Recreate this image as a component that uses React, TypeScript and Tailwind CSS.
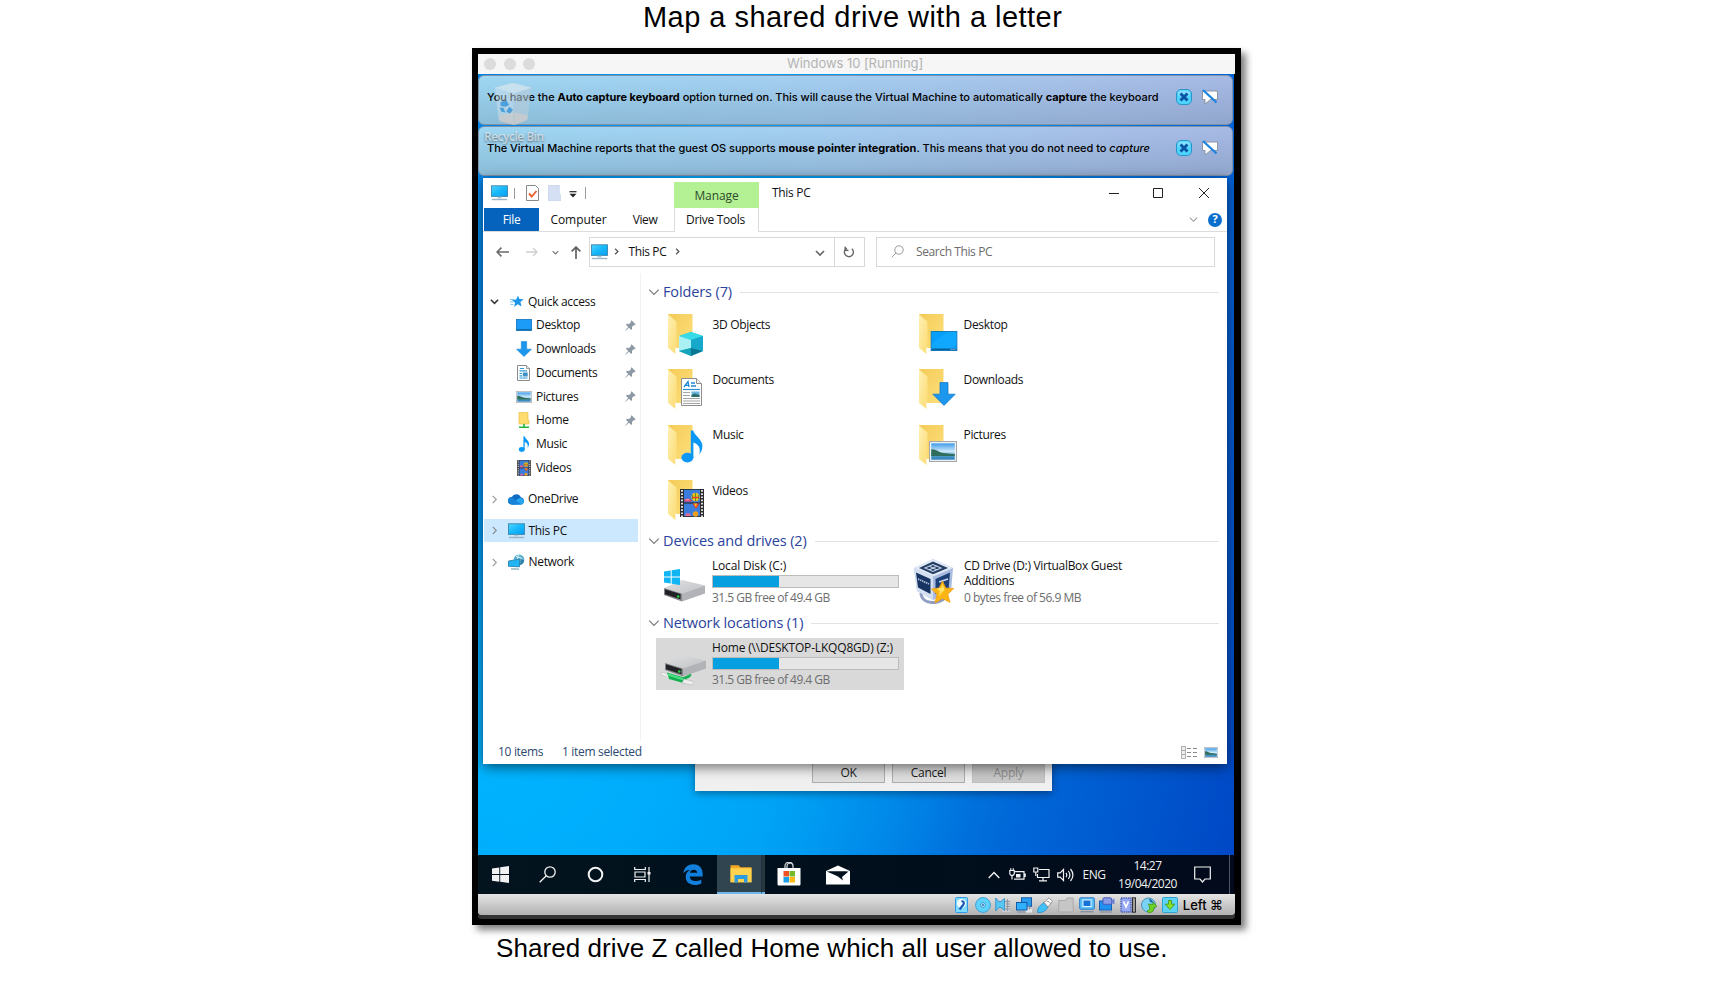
import React from "react";

type IconProps = { className?: string };

const Monitor = ({ className = "" }: IconProps) => (
  <svg viewBox="0 0 17 16" className={className}>
    <defs>
      <linearGradient id="mon" x1="0" y1="0" x2="1" y2="1">
        <stop offset="0" stopColor="#4fd3ff" />
        <stop offset="0.5" stopColor="#16b8fb" />
        <stop offset="1" stopColor="#0a9df0" />
      </linearGradient>
    </defs>
    <rect x="0.5" y="0.8" width="16" height="10.6" fill="url(#mon)" stroke="#3b87ad" strokeWidth="0.9" />
    <rect x="6.5" y="11.8" width="4" height="1.6" fill="#a9c7d8" />
    <rect x="0.8" y="13.8" width="15.4" height="1.4" fill="#9db4c2" />
  </svg>
);

const Chevron = ({ className = "", d = "M1 3l4 4 4-4", w = 1.2 }: IconProps & { d?: string; w?: number }) => (
  <svg viewBox="0 0 10 10" className={className} fill="none" stroke="currentColor" strokeWidth={w}>
    <path d={d} />
  </svg>
);
const RIGHT = "M3 1l4 4-4 4";

const Star = () => (
  <svg viewBox="0 0 14 13" className="h-[13px] w-[14px]">
    <path d="M8 0.4l1.4 3.7 4.3.2-3.3 2.7 1.1 4.6-3.7-2.3-3.7 2.8 1-4.3L2 5l4.200-.6z" fill="#1c96ea" />
    <path d="M0 4.500h4M0 7h3.500M0.500 9.500h3" stroke="#5bb7f2" strokeWidth="0.8" />
  </svg>
);
const DesktopSmall = () => (
  <svg viewBox="0 0 16 12" className="h-[12px] w-[16px]">
    <rect x="0.4" y="0.4" width="15.2" height="11.2" fill="#1c9cf6" stroke="#1173bd" strokeWidth="0.8" />
    <path d="M1 10.6h14" stroke="#0c5c9c" strokeWidth="0.9" />
  </svg>
);
const Arrow = ({ className = "" }: IconProps) => (
  <svg viewBox="0 0 24 24" className={className}>
    <path d="M8 .6h8v11.6h7.2L12 23.4.8 12.2H8z" fill="#1d97ee" stroke="#0f7ccc" strokeWidth="0.8" />
  </svg>
);
const DocSmall = () => (
  <svg viewBox="0 0 13 16" className="h-[16px] w-[13px]">
    <path d="M.5.5h9l3 3v12H.5z" fill="#fff" stroke="#8c8c8c" />
    <path d="M9.5.5v3h3" fill="#e6e6e6" stroke="#8c8c8c" strokeWidth="0.8" />
    <path d="M3 3.500h4M2.500 5.800h7.500M2.500 8.500h2.500M2.500 10.800h2.500M2.500 13h8" stroke="#2f9bd8" strokeWidth="1.200" />
    <rect x="5.800" y="7.500" width="4.900" height="4" fill="#3f8fc4" />
  </svg>
);
const Picture = ({ className = "" }: IconProps) => (
  <svg viewBox="0 0 28 20" className={className} preserveAspectRatio="none">
    <defs>
      <linearGradient id="sky" x1="0" y1="0" x2="0" y2="1">
        <stop offset="0" stopColor="#3f9be8" />
        <stop offset="0.5" stopColor="#cfe9fa" />
        <stop offset="0.7" stopColor="#5aa6cf" />
        <stop offset="1" stopColor="#2a7bb6" />
      </linearGradient>
    </defs>
    <rect x="0.5" y="0.5" width="27" height="19" fill="#fff" stroke="#a3a8ad" strokeWidth="1.300" />
    <rect x="2.200" y="2.200" width="23.600" height="15.600" fill="url(#sky)" />
    <path d="M2.200 8c3-.5 5 .8 8 2.200s9 1.800 15.600 2.300v1.700H2.200z" fill="#2f6e5a" />
  </svg>
);
const HomeFolder = () => (
  <svg viewBox="0 0 12 16" className="h-[16px] w-[12px]">
    <path d="M1 .5h9v8h1v3.500H1z" fill="#ffdc6e" stroke="#e8bf45" strokeWidth="0.7" />
    <path d="M6 12v3M1 15.200h10" stroke="#21b53a" strokeWidth="1.600" />
  </svg>
);
const Note = ({ className = "" }: IconProps) => (
  <svg viewBox="0 0 22 33" className={className}>
    <ellipse cx="6.400" cy="27.600" rx="6" ry="4.800" fill="#0b98f5" />
    <path d="M9.800 28V.5h2.600c.2 4.500 9 8.500 9 15.500 0 3.400-1.200 6-3 8.500 1.500-6.500-.7-10-6-12V28z" fill="#0b98f5" />
  </svg>
);
const Film = ({ className = "" }: IconProps) => (
  <svg viewBox="0 0 24 28" className={className}>
    <rect width="24" height="28" fill="#2c2c30" />
    <rect x="4" y="0.800" width="16" height="12.600" fill="#3a7ddc" />
    <rect x="4" y="14.600" width="16" height="12.600" fill="#3a7ddc" />
    <path d="M2 1v27M22 1v27" stroke="#e8e8e8" strokeWidth="1.900" strokeDasharray="1.700 1.500" />
    <circle cx="15.500" cy="8" r="4.200" fill="#f0c020" />
    <path d="M15.500 4v8M12.500 6v4M18.500 6v4" stroke="#5a8f2e" strokeWidth="1" />
    <path d="M12 8.500h7" stroke="#d8402c" strokeWidth="1.300" />
    <path d="M4 12.500c0-4 7-4 8 0z" fill="#e5374b" />
    <path d="M5.500 10.800h4" stroke="#f3a0d8" strokeWidth="1.200" />
    <path d="M12.500 14.600h7l-3 5h-1z" fill="#e0412c" />
    <path d="M14 14.600h3l-1 4z" fill="#f0c020" />
    <circle cx="15.500" cy="25" r="2.700" fill="#f0a020" />
    <path d="M5 27c.5-4 5-4 6 0z" fill="#e56a9b" />
  </svg>
);
const Cloud = () => (
  <svg viewBox="0 0 17 11" className="h-[11px] w-[17px]">
    <path d="M4 10.500A3.700 3.700 0 013.800 3 5 5 0 0113 3.500a3.600 3.600 0 01.5 7z" fill="#0f6cc4" />
    <path d="M3.500 10.500L9 5.500a4 4 0 014.500-1.300 3.300 3.300 0 01.3 6.300z" fill="#27a5ee" />
    <path d="M1 9.500A3.500 3.500 0 014 3.400l9 6.900c-3 .3-10 1-12-.8z" fill="#1784d9" />
  </svg>
);
const NetworkIcon = () => (
  <svg viewBox="0 0 17 16" className="h-[16px] w-[17px]">
    <circle cx="11" cy="5.800" r="5.400" fill="#5fb0cf" />
    <path d="M8 2c2 2 6 1 7 4M11 .5c-2 3-2 7 0 10" stroke="#d8f0f8" strokeWidth="1" fill="none" />
    <path d="M13 5c2 0 3 1 3 2-.5 2-2 3.500-4 4z" fill="#2e7fa8" />
    <path d="M.5 7l11-1.800v7.600L.5 12.300z" fill="#21b5f5" stroke="#2b83ad" strokeWidth="0.900" />
    <path d="M3 14.800l8 .4" stroke="#86a9bb" strokeWidth="1.300" />
  </svg>
);
const Pin = () => (
  <svg viewBox="0 0 10 10" className="h-[11px] w-[11px] text-[#8c98a4]">
    <path d="M6 .3L9.700 4l-.9.700-.7-.2-1.800 1.800.2 1.900-.9.900-2-2.100L.3 9.900.1 9.700l2.800-3.300L.9 4.400l.9-.9 1.900.2 1.800-1.800-.3-.8z" fill="currentColor" />
  </svg>
);

const Folder = ({ children }: { children: React.ReactNode }) => (
  <div className="relative h-[42px] w-[40px]">
    <svg viewBox="0 0 40 42" className="h-[42px] w-[40px]">
      <defs>
        <linearGradient id="fb" x1="0" y1="0" x2="1" y2="1">
          <stop offset="0" stopColor="#f3cb58" />
          <stop offset="1" stopColor="#ffe07c" />
        </linearGradient>
        <linearGradient id="ff" x1="0" y1="0" x2="1" y2="1">
          <stop offset="0" stopColor="#fff0b4" />
          <stop offset="1" stopColor="#fbdc73" />
        </linearGradient>
      </defs>
      <path d="M1 0h24.500v34H9z" fill="url(#fb)" />
      <path d="M1 .5l8.500 7v24.500c-1.500 1-1.500 4-1 8L1 34z" fill="url(#ff)" />
    </svg>
    {children}
  </div>
);

const Cube = () => (
  <svg viewBox="0 0 24 24" className="absolute left-[12px] top-[18px] h-[24px] w-[24px]">
    <path d="M12 0l12 4v15l-12 5-12-5V4z" fill="#22b7cf" />
    <path d="M12 0l12 4-12 4L0 4z" fill="#36dbe6" />
    <path d="M0 4l12 4v8L0 19z" fill="#a9f1f5" />
    <path d="M12 8l12-4v15l-12-3z" fill="#17a9cb" />
    <path d="M0 19l12-3v8z" fill="#14a3b8" />
    <path d="M24 19l-12-3v8z" fill="#067893" />
  </svg>
);
const DocBig = () => (
  <svg viewBox="0 0 21 28" className="absolute left-[14px] top-[9px] h-[28px] w-[21px]">
    <path d="M.5.5h15l5 5v22H.5z" fill="#fff" stroke="#8e8e8e" />
    <path d="M15.500.5v5h5" fill="#eee" stroke="#8e8e8e" />
    <path d="M3 9l4-5.500L8 9M4.500 7.300h3M10 5h4M10 8h5" stroke="#1b88d6" strokeWidth="1.300" fill="none" />
    <path d="M2 11.500h17" stroke="#2a8fd0" strokeWidth="1.200" />
    <path d="M2 14.500h7M2 17.500h7M2 20.500h17M2 23h17M2 25.500h17" stroke="#a5a5a5" strokeWidth="1" />
    <rect x="10.500" y="13.500" width="8" height="5.500" fill="#6bb3e0" />
    <path d="M10.500 17l3-1.500 5 1.500v2h-8z" fill="#2d6f66" />
  </svg>
);
const DesktopBig = () => (
  <svg viewBox="0 0 28 21" className="absolute left-[12px] top-[17px] h-[20px] w-[28px]">
    <rect x="0.500" y="0.500" width="27" height="20" fill="#06a0fc" stroke="#1377b8" />
    <path d="M1 14L17 1h10v14l-8 4H1z" fill="#18acff" opacity=".6" />
    <path d="M1 19.200h26" stroke="#0a5f9a" strokeWidth="1.600" />
    <path d="M21 19.200h5" stroke="#d8efff" strokeWidth="1" strokeDasharray="1 1" />
  </svg>
);

const WinLogo = ({ className = "" }: IconProps) => (
  <svg viewBox="0 0 17 17" className={className} fill="currentColor">
    <path d="M0 2.400l7.300-1v6.700H0zM8.200 1.300L17 0v8.100H8.200zM0 9h7.300v6.700l-7.300-1zM8.200 9H17v8l-8.800-1.200z" />
  </svg>
);

const DriveBody = () => (
  <>
    <defs>
      <linearGradient id="drv" x1="0" y1="0" x2="1" y2="1">
        <stop offset="0" stopColor="#e0e1e3" />
        <stop offset="1" stopColor="#c0c1c4" />
      </linearGradient>
    </defs>
    <path d="M1 8L19 0l23 5.500-23 8z" fill="url(#drv)" />
    <path d="M19 13.500L42 5.500v8L19 21.500z" fill="#b2b3b7" />
    <path d="M1 8l18 5.500v8L1 15z" fill="#85868a" />
    <path d="M2 9.300l15.500 4.700v5.200L2 14.200z" fill="#222326" />
    <circle cx="15.200" cy="16.500" r="1.300" fill="#25d03f" />
  </>
);
const LocalDrive = () => (
  <svg viewBox="0 0 43 33" className="h-[33px] w-[43px]">
    <g transform="translate(0 11)"><DriveBody /></g>
    <path d="M1 2.500l6.700-1v6H1zM8.700 1.300L17 0v7.500H8.700zM1 8.500h6.700v6l-6.700-1zM8.700 8.500H17V16l-8.300-1.300z" fill="#10b6f4" />
  </svg>
);
const NetDrive = () => (
  <svg viewBox="0 0 48 32" className="h-[32px] w-[48px]">
    <g transform="translate(4 0)"><DriveBody /></g>
    <path d="M1 17.500l6 1 3 4.500-1 2-3-3.500-5-1.500z" fill="#eceeee" stroke="#b9bcbc" strokeWidth="0.500" />
    <path d="M7 17.500l16 4.800 8-3.500c1 2-1 4-4 4.800l-2 5L9 24z" fill="#13b04f" />
    <path d="M8 19.500l15 4.700" stroke="#4fe08a" strokeWidth="2" />
    <path d="M24 24l8 2c2.200.6 1.500 4.500-.8 4L22 28z" fill="#eceeee" stroke="#b0b3b3" strokeWidth="0.600" />
  </svg>
);
const VBoxCube = () => (
  <svg viewBox="0 0 42 46" className="h-[46px] w-[42px]">
    <path d="M8 35c0 12 20 12 24 4" fill="none" stroke="#8f9ec2" strokeWidth="3" />
    <path d="M20 1l20 9-2 24-18 8L4 33 1 10z" fill="#a9bcdf" />
    <path d="M20 1l20 9-20 8.500L1 10z" fill="#e3ebf7" />
    <path d="M20 3.500L35 10l-15 6.300L6 10z" fill="#243e66" />
    <path d="M12 10l8-3.500 8 3.500-8 3.500zM16 8l8 4M24 8l-8 4" fill="none" stroke="#c9d6ea" strokeWidth="1.100" />
    <path d="M1 10l19 8.500V42L4 33z" fill="#d5e0f2" />
    <path d="M3 14.500l14.500 6.500v15L5 29.500z" fill="#173462" />
    <path d="M5 21l11 5" stroke="#aebfdc" strokeWidth="1.700" strokeDasharray="1.500 .7" />
    <path d="M22.500 21l14.500-6.500-1.300 16-13.200 6z" fill="#1d3f78" />
    <path d="M26 24l9-3" stroke="#c7d5ec" strokeWidth="1.700" />
    <path d="M29.500 23l3.300 7 8 .5-6 5.500 2.200 8.500-7.500-4-7.500 4.500 2-8.500-5.500-5.500 7.500-1z" fill="#fdb515" stroke="#f39a0c" strokeWidth="0.700" />
    <path d="M29.500 26l2 6-6 6 1.500-4.500-3.500-3 4.500-.5z" fill="#ffe46a" />
  </svg>
);
const RecycleBin = () => (
  <svg viewBox="0 0 38 44" className="h-[42px] w-[38px]">
    <path d="M0 5L19 0l19 5-4 34-14 5-16-5z" fill="#d9e4ec" opacity=".6" />
    <path d="M20 11l18-6-4 34-14 5z" fill="#a9bccb" opacity=".45" />
    <path d="M0 5l19-5 19 5-18 6z" fill="#e6eef3" opacity=".75" stroke="#d4e1e9" strokeWidth="0.800" />
    <path d="M5 34l15-3 15 3-1.500 5L20 44 5 40z" fill="#e5cfc4" opacity=".8" />
    <path d="M20 11v32" stroke="#b5cbd8" strokeWidth="0.800" />
    <path d="M6 20l6-2 3 5-4 2-5-1zM5 26l4 0 2 5-4-1zM12 30l3-5 4 3-3 4z" fill="#2f8fd8" />
  </svg>
);

const CloseBadge = () => (
  <svg viewBox="0 0 16 16" className="h-[16px] w-[16px]">
    <rect x="0.500" y="0.500" width="15" height="15" rx="4.500" fill="#4ed3fd" stroke="#2b93c8" />
    <rect x="2" y="1.500" width="12" height="6" rx="3" fill="#9fe9ff" opacity=".6" />
    <path d="M4.500 4.500l7 7M11.500 4.500l-7 7" stroke="#0b55a5" strokeWidth="3" />
  </svg>
);
const MuteBubble = () => (
  <svg viewBox="0 0 18 16" className="h-[16px] w-[18px]">
    <path d="M1.500 2h15v8.500h-7L4 15v-4.500H1.500z" fill="#fff" stroke="#868e9c" strokeWidth="0.900" />
    <path d="M2 1l13.500 12.500" stroke="#1d84e0" strokeWidth="2.300" />
  </svg>
);

function BannerRow({ children }: { children: React.ReactNode }) {
  return (
    <div className="flex h-[50px] w-[755px] items-start rounded-md border border-[#8292a8] bg-[linear-gradient(to_bottom,rgba(255,255,255,0.08),rgba(110,130,150,0.28)),linear-gradient(to_right,#96d4f2,#9dcbf0_45%,#a1bfea_75%,#9fb4e2)] pl-[8px] pt-[13px]">
      <div className="w-[689px] whitespace-nowrap font-['Inter'] text-[11px] font-medium leading-[16px] tracking-[-0.030px] text-black">{children}</div>
      <div className="flex gap-[9px]">
        <CloseBadge />
        <MuteBubble />
      </div>
    </div>
  );
}

function SideItem({ icon, label, pin }: { icon: React.ReactNode; label: string; pin?: boolean }) {
  return (
    <div className="flex h-[23.700px] items-center pl-[32px]">
      <div className="flex w-[17px] justify-center">{icon}</div>
      <span className="ml-[4px] flex-1">{label}</span>
      {pin && <div className="mr-[4px]"><Pin /></div>}
    </div>
  );
}

function GroupHeader({ label }: { label: string }) {
  return (
    <div className="flex h-[20px] items-center">
      <Chevron className="h-[12px] w-[12px] text-[#7a7a7a]" w={1} />
      <span className="ml-[3px] whitespace-nowrap text-[14.500px] tracking-[-0.120px] text-[#2b439c]">{label}</span>
      <div className="ml-[8px] h-px flex-1 bg-[#e2e2e2]" />
    </div>
  );
}

function FolderTile({ label, children }: { label: string; children: React.ReactNode }) {
  return (
    <div className="flex h-[55.400px] w-[251px]">
      <Folder>{children}</Folder>
      <span className="ml-[5.500px] mt-[2.600px] leading-[16px]">{label}</span>
    </div>
  );
}

function DriveInfo({ label }: { label: string }) {
  return (
    <div className="w-[187px]">
      <div className="whitespace-nowrap leading-[15px] tracking-[-0.180px]">{label}</div>
      <div className="mt-[2px] h-[13px] border border-[#bcbcbc] bg-[#e6e6e6]">
        <div className="h-full w-[66px] bg-[#069fe0]" />
      </div>
      <div className="mt-[2px] whitespace-nowrap leading-[15px] tracking-[-0.520px] text-[#6d6d6d]">31.5 GB free of 49.4 GB</div>
    </div>
  );
}

function Explorer() {
  return (
    <div className="flex h-[586px] w-[744px] flex-col bg-white text-[12px] tracking-[-0.320px] text-[#111] shadow-[0_3px_12px_rgba(0,0,0,0.55)]">
      <div className="flex h-[30px]">
        <div className="flex w-[191px] items-center pl-[8px]">
          <Monitor className="h-[16px] w-[17px]" />
          <div className="ml-[6px] h-[11px] w-px bg-[#9a9a9a]" />
          <svg viewBox="0 0 13 16" className="ml-[11px] h-[16px] w-[13px]">
            <path d="M.5.5h9l3 3v12H.5z" fill="#fff" stroke="#8a8a8a" />
            <path d="M3 8.500l2.700 3L10.500 6" fill="none" stroke="#e8602c" strokeWidth="1.900" />
          </svg>
          <svg viewBox="0 0 13 16" className="ml-[9px] h-[16px] w-[13px]">
            <path d="M.3.3h11v9l1.500.5v5.900H.3z" fill="#d5e0f4" stroke="#bccbe8" strokeWidth="0.600" />
          </svg>
          <svg viewBox="0 0 8 7" className="ml-[8px] mt-[3px] h-[7px] w-[8px]">
            <path d="M.5.7h7" stroke="#222" strokeWidth="1.200" />
            <path d="M.5 2.800h7L4 6.500z" fill="#222" />
          </svg>
          <div className="ml-[8px] h-[12px] w-px bg-[#9a9a9a]" />
        </div>
        <div className="mt-[4px] flex h-[26px] w-[85px] items-center justify-center bg-[#b4f195] pt-px tracking-[-0.100px] text-[#2f4a2a]">Manage</div>
        <div className="flex flex-1 justify-between pl-[13px]">
          <span className="mt-[7px] leading-[16px]">This PC</span>
          <svg viewBox="0 0 102 12" className="mr-[17.500px] mt-[9px] h-[12px] w-[102px]" fill="none" stroke="#222">
            <path d="M1 6.500h10M45.500 1.500h9v9h-9zM91 1l10 10M101 1L91 11" />
          </svg>
        </div>
      </div>
      <div className="flex h-[24px] border-b border-[#dcdcdc]">
        <div className="ml-px flex h-[23px] w-[55px] items-center justify-center bg-[#0563bd] pt-px text-white">File</div>
        <div className="flex h-[23px] w-[79px] items-center justify-center pt-px tracking-[-0.050px]">Computer</div>
        <div className="flex h-[23px] w-[56px] items-center justify-center pr-[2px] pt-px tracking-[-0.400px]">View</div>
        <div className="flex h-[24px] w-[85px] items-center justify-center border-x border-[#dcdcdc] bg-white pr-[2px]">Drive Tools</div>
        <div className="flex flex-1 items-center justify-end pr-[5px]">
          <Chevron className="mr-[10px] h-[9px] w-[9px] text-[#9a9a9a]" />
          <div className="flex h-[14px] w-[14px] items-center justify-center rounded-full bg-[#0b6fce] text-[11px] font-bold text-white">?</div>
        </div>
      </div>
      <div className="flex h-[41px] items-start pt-[5px]">
        <div className="flex h-[30px] w-[105.500px] items-center pl-[13px]">
          <svg viewBox="0 0 12 10" className="h-[12px] w-[13px]" fill="none" stroke="#6a6a6a" strokeWidth="1.500"><path d="M12 5H1M5 1L1 5l4 4" /></svg>
          <svg viewBox="0 0 12 10" className="ml-[17px] h-[12px] w-[12px]" fill="none" stroke="#cfcfcf" strokeWidth="1.300"><path d="M0 5h11M7 1l4 4-4 4" /></svg>
          <Chevron className="ml-[14px] h-[7px] w-[7px] text-[#777]" w={1.800} />
          <svg viewBox="0 0 10 12" className="ml-[11px] mt-px h-[13px] w-[12px]" fill="none" stroke="#5e5e5e" strokeWidth="1.500"><path d="M5 12V1M1 5l4-4 4 4" /></svg>
        </div>
        <div className="flex h-[30px] w-[276px] border border-[#d9d9d9]">
          <div className="flex flex-1 items-center pb-px pl-[1.500px]">
            <Monitor className="h-[16px] w-[17px]" />
            <Chevron className="ml-[5px] h-[7px] w-[7px] text-[#555]" d={RIGHT} w={1.800} />
            <span className="ml-[8.500px] tracking-[-0.400px]">This PC</span>
            <Chevron className="ml-[8px] h-[7px] w-[7px] text-[#555]" d={RIGHT} w={1.800} />
          </div>
          <Chevron className="mr-[9px] mt-[10px] h-[10px] w-[10px] text-[#666]" w={1.700} />
          <div className="flex w-[30px] items-center justify-center border-l border-[#d9d9d9]">
            <svg viewBox="0 0 12 12" className="h-[12px] w-[12px]" fill="none" stroke="#666" strokeWidth="1.400"><path d="M8.500 2.500A4.500 4.500 0 113.500 2.400M1.800 1v3.500h3.500" transform="rotate(6 6 6)" /></svg>
          </div>
        </div>
        <div className="ml-[11px] flex h-[30px] w-[339px] items-center border border-[#d9d9d9] pb-px pl-[14px] text-[#6c6c6c]">
          <svg viewBox="0 0 13 13" className="h-[13px] w-[13px]" fill="none" stroke="#999" strokeWidth="1"><circle cx="8" cy="5" r="4.200" /><path d="M5 8L.8 12.300" /></svg>
          <span className="ml-[12.500px] tracking-[-0.400px]">Search This PC</span>
        </div>
      </div>
      <div className="flex h-[467px]">
        <div className="w-[158px] border-r border-[#f2f2f2] pt-[16.600px]">
          <div className="flex h-[24px] items-center pl-[7px]">
            <Chevron className="h-[9px] w-[9px] text-[#333]" w={1.700} />
            <div className="ml-[11px]"><Star /></div>
            <span className="ml-[4px]">Quick access</span>
          </div>
          <SideItem icon={<DesktopSmall />} label="Desktop" pin />
          <SideItem icon={<Arrow className="h-[16px] w-[16px]" />} label="Downloads" pin />
          <SideItem icon={<DocSmall />} label="Documents" pin />
          <SideItem icon={<Picture className="h-[12px] w-[16px]" />} label="Pictures" pin />
          <SideItem icon={<HomeFolder />} label="Home" pin />
          <SideItem icon={<Note className="h-[16px] w-[12px]" />} label="Music" />
          <SideItem icon={<Film className="h-[16px] w-[14px]" />} label="Videos" />
          <div className="mt-[8px] flex h-[23.500px] items-center pl-[7px]">
            <Chevron className="h-[9px] w-[9px] text-[#999]" d={RIGHT} />
            <div className="ml-[8.500px]"><Cloud /></div>
            <span className="ml-[3.500px]">OneDrive</span>
          </div>
          <div className="ml-px mt-[8px] flex h-[23.500px] w-[154px] items-center bg-[#cce8ff] pl-[6px]">
            <Chevron className="h-[9px] w-[9px] text-[#888]" d={RIGHT} />
            <Monitor className="ml-[8.500px] h-[16px] w-[17px]" />
            <span className="ml-[4px]">This PC</span>
          </div>
          <div className="mt-[8px] flex h-[23.500px] items-center pl-[7px]">
            <Chevron className="h-[9px] w-[9px] text-[#999]" d={RIGHT} />
            <div className="ml-[8.500px]"><NetworkIcon /></div>
            <span className="ml-[4px]">Network</span>
          </div>
        </div>
        <div className="flex flex-1 flex-col pl-[7px] pr-[8px] pt-[9px]">
          <GroupHeader label="Folders (7)" />
          <div className="ml-[19px] mt-[12px] flex h-[217px] w-[503px] flex-wrap content-start">
            <FolderTile label="3D Objects"><Cube /></FolderTile>
            <FolderTile label="Desktop"><DesktopBig /></FolderTile>
            <FolderTile label="Documents"><DocBig /></FolderTile>
            <FolderTile label="Downloads"><Arrow className="absolute left-[14px] top-[13px] h-[24px] w-[24px]" /></FolderTile>
            <FolderTile label="Music"><Note className="absolute left-[14px] top-[5px] h-[33px] w-[22px]" /></FolderTile>
            <FolderTile label="Pictures"><Picture className="absolute left-[11px] top-[16px] h-[21px] w-[28px]" /></FolderTile>
            <FolderTile label="Videos"><Film className="absolute left-[13px] top-[9px] h-[28px] w-[24px]" /></FolderTile>
          </div>
          <GroupHeader label="Devices and drives (2)" />
          <div className="flex h-[62px] pl-[15px] pt-[7px]">
            <div className="mt-[11px] w-[49px]"><LocalDrive /></div>
            <DriveInfo label="Local Disk (C:)" />
            <div className="ml-[13.500px] w-[51.500px]"><VBoxCube /></div>
            <div className="w-[200px] leading-[15px]">
              <div>CD Drive (D:) VirtualBox Guest</div>
              <div>Additions</div>
              <div className="mt-[2px] tracking-[-0.500px] text-[#6d6d6d]">0 bytes free of 56.9 MB</div>
            </div>
          </div>
          <GroupHeader label="Network locations (1)" />
          <div className="ml-[8px] mt-[5px] flex h-[52px] w-[247.500px] bg-[#d9d9d9] pl-[4px] pt-[2px]">
            <div className="mt-[15px] w-[52px]"><NetDrive /></div>
            <DriveInfo label="Home (\\DESKTOP-LKQQ8GD) (Z:)" />
          </div>
        </div>
      </div>
      <div className="flex h-[24px] items-center pl-[15px] text-[#2b4a6f]">
        <span className="w-[64px]">10 items</span>
        <span className="flex-1">1 item selected</span>
        <svg viewBox="0 0 17 13" className="h-[13px] w-[17px]">
          <rect x="0.500" y="0.500" width="4" height="12" fill="#eee" stroke="#aaa" strokeWidth="0.900" />
          <path d="M0.500 4.500h4M0.500 8.500h4" stroke="#aaa" />
          <path d="M6 2.500h11M6 6.500h11M6 10.500h11" stroke="#8a8a8a" strokeDasharray="4 2" />
        </svg>
        <div className="ml-[6px] mr-[9px]"><Picture className="h-[11px] w-[14px]" /></div>
      </div>
    </div>
  );
}

function Dialog() {
  return (
    <div className="flex h-[60px] w-[357px] items-end bg-[#f0f0f0] pb-[8px] pl-[117px] text-[12px] tracking-[-0.300px] text-[#1a1a1a] shadow-[0_2px_8px_rgba(0,0,0,0.4)]">
      <div className="flex gap-[7px]">
        <div className="flex h-[20px] w-[73px] items-center justify-center border border-[#adadad] bg-[#dedede]">OK</div>
        <div className="flex h-[20px] w-[73px] items-center justify-center border border-[#adadad] bg-[#dedede]">Cancel</div>
        <div className="flex h-[20px] w-[73px] items-center justify-center border border-[#bfbfbf] bg-[#c8c8c8] text-[#8f8f8f]">Apply</div>
      </div>
    </div>
  );
}

function Taskbar() {
  return (
    <div className="flex h-[39px] bg-linear-to-r from-[#03141f] via-[#000f1b] to-[#020a1c] text-[#f2f2f2]">
      <div className="flex w-[239px] items-center pl-[13.500px]">
        <WinLogo className="h-[17px] w-[17px]" />
        <svg viewBox="0 0 17 17" className="ml-[30.500px] h-[17px] w-[17px]" fill="none" stroke="currentColor" strokeWidth="1.300"><circle cx="11" cy="6" r="5.200" /><path d="M7.300 9.700L.7 16.300" /></svg>
        <svg viewBox="0 0 17 17" className="ml-[31px] h-[17px] w-[17px]" fill="none" stroke="currentColor" strokeWidth="2"><circle cx="8.500" cy="8.500" r="6.800" /></svg>
        <svg viewBox="0 0 17 17" className="ml-[30px] h-[17px] w-[17px]" fill="none" stroke="currentColor" strokeWidth="1.200">
          <path d="M.7 1v2.500h10.600V1M.7 16v-2.500h10.600V16M1 6h10v5H1zM15 1v15" /><path d="M13.500 6h3v2.500h-3z" fill="currentColor" stroke="none" />
        </svg>
        <svg viewBox="0 0 20 21" className="ml-[32px] h-[21px] w-[20px]">
          <path d="M.3 9.200C1.300 3.500 5 .3 10.300.3c6 0 9.400 4.200 9.400 9.500v2.600H6.800c.2 5.400 7.500 5.600 11.500 3v4C12.500 22.500 2.700 21 2.700 13c0-3.500 2-6 4.700-7.300C5.500 5.700 2 6.700.3 9.200zM6.900 8.800h7.300C14.200 4.500 7.400 4.700 6.900 8.800z" fill="#1180dd" />
        </svg>
      </div>
      <div className="flex w-[44px] items-center justify-center border-b-2 border-[#6fb8ea] bg-[#30454f] pl-[3px]">
        <svg viewBox="0 0 22 18" className="h-[18px] w-[22px]">
          <path d="M.5.3h8l2 2h11v15H.5z" fill="#f4a923" /><path d="M.5 3.300h21v14H.5z" fill="#ffd34f" />
          <path d="M4.500 17.500V10h13v7.500H14V14H8v3.500z" fill="#2c9be0" />
        </svg>
      </div>
      <div className="w-[4px] border-b-2 border-l border-b-[#6fb8ea] border-l-[#1f3038] bg-[#27393f]" />
      <div className="flex flex-1 items-center pl-[12px]">
        <svg viewBox="0 0 24 24" className="-mt-[2px] h-[24px] w-[24px]">
          <path d="M8 7V4a4 4 0 018 0v3M10 7V4a3 3 0 016 0" fill="none" stroke="#c8ced2" strokeWidth="1.300" />
          <path d="M.5 6h23v16c0 1-.5 1.500-1.500 1.500H2c-1 0-1.500-.5-1.500-1.500z" fill="#fff" />
          <path d="M6.500 9H12v5.500H6.500z" fill="#ee5022" /><path d="M12.500 9H18v5.500h-5.500z" fill="#76b82a" /><path d="M6.500 15H12v5.500H6.500z" fill="#1b9fe8" /><path d="M12.500 15H18v5.500h-5.500z" fill="#fcb813" />
        </svg>
        <svg viewBox="0 0 24 20" className="ml-[25px] h-[20px] w-[24px]">
          <path d="M0 6L12 .5 24 6v13.500H0z" fill="#fff" /><path d="M.5 6.500h20.500L12 11z" fill="#03121d" /><path d="M2 6.600h20.500L16 12l1 3.500-5-4z" fill="#03121d" />
        </svg>
        <svg viewBox="0 0 12 8" className="ml-[137.500px] h-[8px] w-[12px]" fill="none" stroke="currentColor" strokeWidth="1.400"><path d="M.7 7L6 1.500 11.300 7" /></svg>
        <svg viewBox="0 0 17 13" className="ml-[9.500px] h-[13px] w-[17px]" fill="none" stroke="currentColor" strokeWidth="1.200">
          <path d="M6 3.600h9v7.500H5M16.200 5.500v3.500" /><path d="M.8 2.500h4.500v3C5.300 8 .8 8 .8 5.500zM3 7.500v4M1.800.3v2M4.300.3v2" /><path d="M7 6h4.500v3.500H7z" fill="currentColor" stroke="none" />
        </svg>
        <svg viewBox="0 0 17 15" className="ml-[7px] h-[15px] w-[17px]" fill="none" stroke="currentColor" strokeWidth="1.200">
          <path d="M6 2.500h10v8H4.500V7M10 10.500v3M6 13.800h8" /><path d="M.8 1h4v4h-4zM2.800 5v4" />
        </svg>
        <svg viewBox="0 0 17 14" className="ml-[6.500px] h-[14px] w-[17px]" fill="none" stroke="currentColor" strokeWidth="1.200">
          <path d="M.7 4.800h2.500L6.500 1.500v11L3.200 9.200H.7zM9 4.800c1 1.400 1 3 0 4.400M11.300 3c2 2.500 2 5.500 0 8M13.500 1c3 3.700 3 8.300 0 12" />
        </svg>
        <span className="ml-[9px] w-[23px] text-[12px] tracking-[-0.500px]">ENG</span>
        <div className="ml-[12.500px] w-[59px] whitespace-nowrap text-center text-[12px] leading-[17.500px] tracking-[-0.480px]">
          <div>14:27</div>
          <div>19/04/2020</div>
        </div>
        <svg viewBox="0 0 17 17" className="ml-[16.500px] h-[17px] w-[17px]" fill="none" stroke="currentColor" strokeWidth="1.200"><path d="M.7 1h15.600v12H11l-2.500 3L6 13H.7z" /></svg>
        <div className="ml-auto mr-[4px] h-[39px] w-px bg-[#4c5666]" />
      </div>
    </div>
  );
}

function StatusIcons() {
  return (
    <div className="flex items-center gap-[4.800px]">
      <svg viewBox="0 0 16 16" className="h-[16px] w-[16px]"><rect x="1.500" y="0.500" width="12" height="15" rx="1" fill="#7fdcff" stroke="#2f9be8" /><circle cx="7.500" cy="6.500" r="4.600" fill="#f2fcff" /><path d="M7.500 4a2.300 2.300 0 012 3.500L5.500 12.500" fill="none" stroke="#1a58b8" strokeWidth="2.200" /></svg>
      <svg viewBox="0 0 16 16" className="h-[16px] w-[16px]"><circle cx="8" cy="8" r="7.400" fill="#5fd2fb" stroke="#35a4da" /><circle cx="8" cy="8" r="2.300" fill="#c9f2ff" stroke="#2b86c0" strokeWidth="0.800" /><circle cx="8" cy="8" r="0.900" fill="#1b62a8" /></svg>
      <svg viewBox="0 0 16 16" className="h-[16px] w-[16px]"><path d="M9 3h6v12H7z" fill="#c9cdd2" /><path d="M9 4.500h6M11 7h4M11 9.500h4M9 12h6M12.500 2v12" stroke="#8d949c" strokeWidth="0.900" /><path d="M.7 1l3 3.500H6L9.500 1.500v12L6 10.500H3.700l-3 3.500z" fill="#56c6f4" stroke="#2b8cc4" strokeWidth="0.800" /></svg>
      <svg viewBox="0 0 16 16" className="h-[16px] w-[16px]"><path d="M9 12h7v3.500H9z" fill="#e4e6e8" /><rect x="5.500" y="0.800" width="10" height="8.500" fill="#2a9cf0" stroke="#145ba8" /><path d="M7.500 9.500h6v3" stroke="#8a95a3" fill="none" /><rect x="0.500" y="5.500" width="10.500" height="7.500" fill="#2fb0fb" stroke="#145ba8" /><path d="M1 15h9" stroke="#8a95a3" strokeWidth="1.300" /></svg>
      <svg viewBox="0 0 16 16" className="h-[16px] w-[16px]"><path d="M.7 15.500C0 11 3 8.500 7 5.500l4 4.500c-2 4-6 6-10.300 5.500z" fill="#3fc0f8" stroke="#2b86c0" strokeWidth="0.800" /><path d="M7 5.500L12 .8l3.500 3.500L11 10z" fill="#f6f6f6" stroke="#8e8e8e" strokeWidth="0.900" /><path d="M10.500 4l1 1M12.500 5.500l.8.800" stroke="#555" /></svg>
      <svg viewBox="0 0 16 16" className="h-[16px] w-[16px]"><path d="M.7 15V3.500h7l1.500-2.500h6v14z" fill="#c6c6c6" stroke="#a6a6a6" strokeWidth="0.900" /></svg>
      <svg viewBox="0 0 16 16" className="h-[16px] w-[16px]"><rect x="0.700" y="0.800" width="14.600" height="11.400" rx="1" fill="#5cc3f8" stroke="#2a78c8" /><rect x="4" y="3" width="8" height="6.500" fill="#1572d8" stroke="#e3f5ff" /><path d="M1.500 14.700h13" stroke="#8790a0" strokeWidth="1.400" /></svg>
      <svg viewBox="0 0 16 16" className="h-[16px] w-[16px]"><rect x="0.500" y="4" width="12" height="9" fill="#2091f0" stroke="#1560b4" /><rect x="4" y="0.800" width="8.500" height="6.500" rx="1" fill="#8a9be6" stroke="#4a5cb8" /><path d="M12.500 3l3-1.500v6l-3-1.500z" fill="#6e80d6" /><path d="M1 15h12" stroke="#8790a0" strokeWidth="1.200" /></svg>
      <svg viewBox="0 0 16 16" className="h-[16px] w-[16px]"><rect x="1" y="1" width="10" height="14" fill="#96a8f2" stroke="#5062b8" strokeDasharray="1.500 .8" strokeWidth="1.400" /><path d="M3.500 4.500L6 10l2.500-5.500" fill="none" stroke="#fff" strokeWidth="1.700" /><rect x="12.500" y="0.800" width="3" height="14.400" fill="#a0a0a0" stroke="#202020" strokeWidth="0.900" /></svg>
      <svg viewBox="0 0 16 16" className="h-[16px] w-[16px]"><circle cx="7.500" cy="8" r="7" fill="#7ad3f4" stroke="#4a91b8" /><path d="M8 1.500c2.500 1 4 2.500 4.500 4.500L9 5z" fill="#1d6aa8" /><path d="M6 14l3-2-1.500-5 4.500.5v-2.500l4 4.500-3 1-1 4-4 1.500z" fill="#6ed321" stroke="#3c8f12" strokeWidth="0.700" /></svg>
      <svg viewBox="0 0 16 16" className="h-[16px] w-[16px]"><rect x="0.500" y="0.500" width="15" height="15" rx="1" fill="#5fd3f6" stroke="#2ea3cf" /><path d="M6.500 3.500h3v3.700h3.300L8 12.500 3.200 7.200h3.300z" fill="#8be02a" stroke="#3f9a1a" strokeWidth="0.900" /></svg>
    </div>
  );
}

export default function App() {
  return (
    <div className="flex h-[997px] w-[1711px] flex-col overflow-hidden bg-white font-['Liberation_Sans',sans-serif] text-black">
      <h1 className="h-[48px] whitespace-nowrap pl-[643px] text-[29px] leading-[34px] tracking-[0.460px]">Map a shared drive with a letter</h1>
      <div className="ml-[472px] flex h-[877px] w-[769px] flex-col border-[6px] border-black bg-black shadow-[5px_5px_7px_rgba(0,0,0,0.5)]">
        <div className="flex h-[20px] items-center bg-[#f6f6f6]">
          <div className="flex gap-[7.500px] pl-[6px]">
            <div className="h-[12px] w-[12px] rounded-full bg-[#dcdcdc]" />
            <div className="h-[12px] w-[12px] rounded-full bg-[#dcdcdc]" />
            <div className="h-[12px] w-[12px] rounded-full bg-[#dcdcdc]" />
          </div>
          <span className="ml-[252px] whitespace-nowrap font-['Inter'] text-[13px] tracking-[-0.050px] text-[#b3b3b3]">Windows 10 [Running]</span>
        </div>
        <div className="relative flex h-[820px] w-[756px] flex-col overflow-hidden bg-[radial-gradient(ellipse_500px_300px_at_0%_85%,rgba(0,180,255,1),rgba(0,180,255,0)),linear-gradient(105deg,#0280e4_0%,#00a2f8_25%,#0098f0_50%,#0068d8_75%,#0046c4_100%)] font-['Open_Sans','Noto_Sans',sans-serif]">
          <div className="flex h-[104px] flex-col gap-[1px] pt-[1px]">
            <BannerRow>
              You have the <b>Auto capture keyboard</b> option turned on. This will cause the Virtual Machine to automatically <b>capture</b> the keyboard
            </BannerRow>
            <BannerRow>
              The Virtual Machine reports that the guest OS supports <b>mouse pointer integration</b>. This means that you do not need to <i>capture</i>
            </BannerRow>
          </div>
          <div className="absolute left-[16px] top-[9px] opacity-70"><RecycleBin /></div>
          <div className="absolute left-[6px] top-[56px] whitespace-nowrap text-[12px] font-semibold leading-[14px] tracking-[-0.500px] text-white/60 [text-shadow:0_1px_2px_rgba(60,70,80,0.7)]">Recycle Bin</div>
          <div className="absolute left-[217px] top-[657px]"><Dialog /></div>
          <div className="absolute left-[5px] top-[104px]"><Explorer /></div>
          <div className="mt-auto"><Taskbar /></div>
        </div>
        <div className="flex h-[21px] items-center justify-end rounded-b-[3px] bg-linear-to-b from-[#e4e4e4] to-[#b2b2b2] pr-[12px]">
          <StatusIcons />
          <span className="ml-[5px] whitespace-nowrap font-['Inter'] text-[13px] font-medium leading-[16px]">Left ⌘</span>
        </div>
        <div className="h-[4px] rounded-b-[3px] bg-[#333]" />
      </div>
      <p className="mt-[6px] whitespace-nowrap pl-[496px] text-[26px] leading-[34px] tracking-[0.070px]">Shared drive Z called Home which all user allowed to use.</p>
    </div>
  );
}
